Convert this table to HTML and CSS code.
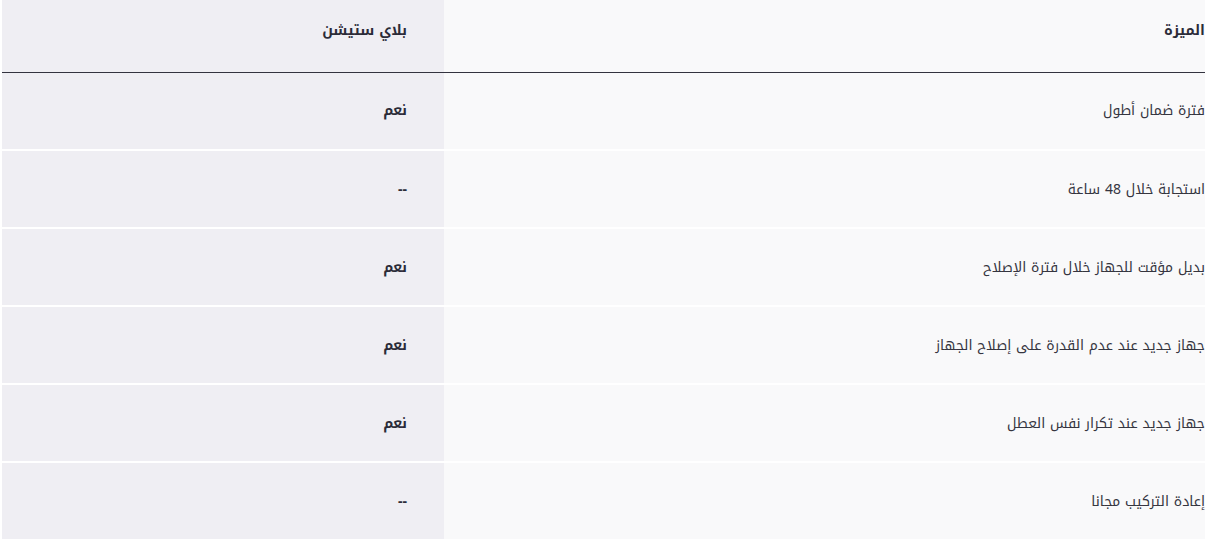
FILE: index.html
```html
<!DOCTYPE html>
<html lang="ar" dir="rtl">
<head>
<meta charset="utf-8">
<link rel="stylesheet" href="styles.css">
</head>
<body>
<div class="wrap">
<table class="cmp">
  <thead>
    <tr><th class="feat">الميزة</th><th class="val">بلاي ستيشن</th></tr>
  </thead>
  <tbody>
    <tr><td class="feat">فترة ضمان أطول</td><td class="val">نعم</td></tr>
    <tr><td class="feat">استجابة خلال 48 ساعة</td><td class="val">--</td></tr>
    <tr><td class="feat">بديل مؤقت للجهاز خلال فترة الإصلاح</td><td class="val">نعم</td></tr>
    <tr><td class="feat">جهاز جديد عند عدم القدرة على إصلاح الجهاز</td><td class="val">نعم</td></tr>
    <tr><td class="feat">جهاز جديد عند تكرار نفس العطل</td><td class="val">نعم</td></tr>
    <tr><td class="feat">إعادة التركيب مجانا</td><td class="val">--</td></tr>
  </tbody>
</table>
</div>
</body>
</html>
```
FILE: styles.css
```css
html, body {
  margin: 0;
  padding: 0;
  background: #ffffff;
}
body {
  font-family: "Noto Kufi Arabic", "Noto Sans Arabic", "DejaVu Sans", sans-serif;
  color: #2b2b38;
}
.wrap {
  padding: 0 7px 0 2px;
}
.cmp {
  width: 100%;
  border-collapse: collapse;
  background: #f9f9fa;
}
.cmp th, .cmp td {
  text-align: right;
  vertical-align: middle;
  padding: 0;
}
.cmp thead th {
  height: 72px;
  border-bottom: 1px solid #33333f;
  font-size: 14px;
  font-weight: bold;
  padding-bottom: 10px;
  box-sizing: border-box;
}
.cmp tbody td {
  height: 78px;
  border-bottom: 2px solid #ffffff;
  box-sizing: border-box;
  font-size: 14px;
  font-weight: normal;
  color: #35353f;
}
.cmp .feat {
  width: 761px;
}
.cmp .val {
  background: #efeef3;
  padding-right: 37px;
}
.cmp tbody .val {
  font-weight: bold;
  font-size: 14px;
  color: #2b2b38;
}
```
